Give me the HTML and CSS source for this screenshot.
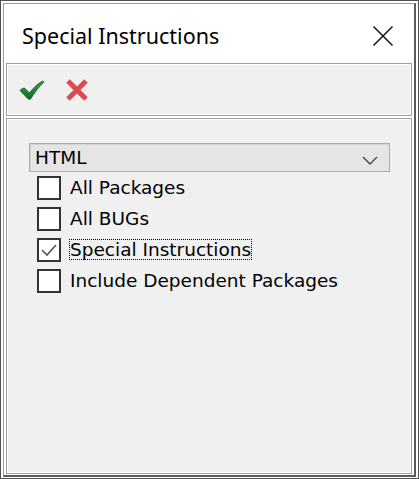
FILE: index.html
```html
<!DOCTYPE html>
<html>
<head>
<meta charset="utf-8">
<link rel="stylesheet" href="styles.css">
</head>
<body>
<div class="frame">
  <div class="window">
    <div class="titlebar">
      <span class="title">Special Instructions</span>
      <svg class="close" width="22" height="22" viewBox="0 0 22 22">
        <path d="M1.5 1.5 L20.5 20.5 M20.5 1.5 L1.5 20.5" stroke="#1a1a1a" stroke-width="1.6" fill="none"/>
      </svg>
    </div>
    <div class="toolbar">
      <svg class="ok" width="26" height="20" viewBox="0 0 26 20">
        <defs>
          <linearGradient id="g" x1="0" y1="0" x2="0" y2="1">
            <stop offset="0" stop-color="#3aa24a"/>
            <stop offset="1" stop-color="#0d6a22"/>
          </linearGradient>
        </defs>
        <path d="M1 10.5 C2.5 9 4 8.2 5.5 8 L10.5 13 C14 8.5 18 4 23.5 1 C24.5 1 25 1.5 24.5 2.5 C19.5 7 15.5 12.5 12 18.5 C11.2 19.6 9.8 19.6 9 18.7 Z" fill="url(#g)" stroke="#0b5218" stroke-width="0.8"/>
      </svg>
      <svg class="cancel" width="24" height="24" viewBox="0 0 24 24">
        <path d="M3 3 L21 21 M21 3 L3 21" stroke="#db4b4f" stroke-width="5" stroke-linecap="butt" fill="none"/>
      </svg>
    </div>
    <div class="panel">
      <div class="select">
        <span>HTML</span>
        <svg class="chev" width="16" height="9" viewBox="0 0 16 9">
          <path d="M1 1 L8 8 L15 1" stroke="#444" stroke-width="1.4" fill="none"/>
        </svg>
      </div>
      <div class="options">
        <label class="opt"><span class="box"></span><span class="lbl">All Packages</span></label>
        <label class="opt"><span class="box"></span><span class="lbl">All BUGs</span></label>
        <label class="opt"><span class="box">
          <svg width="20" height="20" viewBox="0 0 20 20"><path d="M3 10 L8 15 L17 5" stroke="#555" stroke-width="1.6" fill="none"/></svg>
        </span><span class="lbl focus">Special Instructions</span></label>
        <label class="opt"><span class="box"></span><span class="lbl">Include Dependent Packages</span></label>
      </div>
    </div>
  </div>
</div>
</body>
</html>
```

FILE: styles.css
```css
* { box-sizing: border-box; }
html, body { margin: 0; padding: 0; background: #ffffff; }
.frame {
  width: 419px;
  height: 479px;
  border: 1px solid #505050;
  background: #ffffff;
  padding: 2px 2px 1px 2px;
  display: flex;
}
.window {
  flex: 1;
  display: flex;
  flex-direction: column;
  background: #ffffff;
  border-left: 1px solid #9a9a9a;
  border-top: 1px solid #9a9a9a;
  border-right: 2px solid #5a5a5a;
  border-bottom: 2px solid #5a5a5a;
}
.titlebar {
  height: 59px;
  display: flex;
  align-items: center;
  justify-content: space-between;
  padding: 4px 20px 0 18px;
}
.title {
  font-family: "Noto Sans", "Open Sans", sans-serif;
  font-size: 21.5px;
  color: #000;
}
.close { display: block; }
.toolbar {
  height: 53px;
  margin: 0 2px;
  background: #f0f0f0;
  border: 1px solid #a0a0a0;
  box-shadow: inset 1px 1px 0 #ffffff, inset -1px -1px 0 #ffffff;
  display: flex;
  align-items: center;
  gap: 20px;
  padding-left: 12px;
}
.toolbar svg { display: block; }
.panel {
  flex: 1;
  margin: 2px 2px 1px 2px;
  background: #f0f0f0;
  border: 1px solid #a0a0a0;
  box-shadow: inset 1px 1px 0 #ffffff, inset -1px -1px 0 #ffffff;
  padding: 24px 21px 0 22px;
  font-family: "DejaVu Sans", Verdana, sans-serif;
  font-size: 18.5px;
  color: #000;
}
.select {
  height: 29px;
  background: #e5e5e5;
  border: 1px solid #adadad;
  box-shadow: inset 1px 1px 0 #d4d4d4;
  display: flex;
  align-items: center;
  justify-content: space-between;
  padding: 0 11px 0 5px;
}
.chev { display: block; margin-top: 6px; }
.options {
  display: flex;
  flex-direction: column;
  padding-left: 8px;
}
.opt {
  height: 31px;
  display: flex;
  align-items: center;
  gap: 9px;
}
.box {
  width: 24px;
  height: 24px;
  border: 2px solid #333333;
  background: #ffffff;
  display: flex;
  align-items: center;
  justify-content: center;
  flex: none;
}
.box svg { display: block; }
.lbl { line-height: 19px; }
.focus { outline: 1px dotted #000; outline-offset: 0; }
```
